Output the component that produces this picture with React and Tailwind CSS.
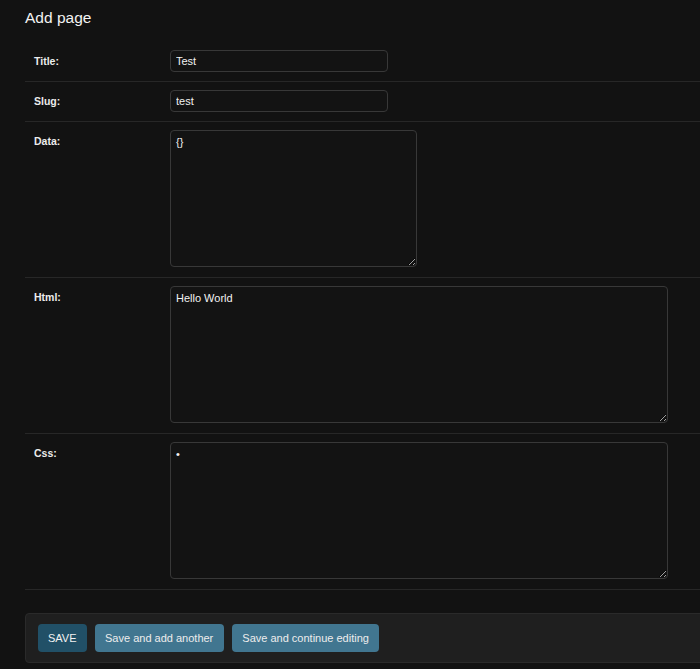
import React from "react";

const font = { fontFamily: '"Liberation Sans", Arial, sans-serif' };

function Row({ label, children, tall }) {
  return (
    <div className={`flex border-b border-[#272727] px-[9px] pt-2 ${tall ? "pb-[10px]" : "pb-[9px]"}`}>
      <div className="w-[136px] shrink-0 pt-[5px] text-[10.5px] font-bold leading-[12px] text-[#ececec]">
        {label}
      </div>
      <div className="flex-1">{children}</div>
    </div>
  );
}

function Input({ value }) {
  return (
    <input
      readOnly
      defaultValue={value}
      className="block h-[22px] w-[218px] rounded-[4px] border border-[#383838] bg-[#131313] px-[5px] text-[11px] text-[#f2f2f2] outline-none"
      style={font}
    />
  );
}

function Area({ value, w }) {
  return (
    <textarea
      readOnly
      defaultValue={value}
      className={`block h-[137px] ${w} rounded-[4px] border border-[#383838] bg-[#131313] px-[5px] py-[4px] text-[11px] leading-[14px] text-[#f2f2f2] outline-none [color-scheme:dark]`}
      style={font}
    />
  );
}

export default function App() {
  return (
    <div className="min-h-[669px] w-full overflow-hidden bg-[#121212] pl-[25px] pt-2" style={font}>
      <h1 className="mb-[14px] text-[15.5px] font-normal leading-[20px] text-[#f3f3f3]">Add page</h1>
      <div className="w-[calc(100%+20px)]">
        <Row label="Title:"><Input value="Test" /></Row>
        <Row label="Slug:"><Input value="test" /></Row>
        <Row label="Data:" tall><Area value="{}" w="w-[247px]" /></Row>
        <Row label="Html:" tall><Area value="Hello World" w="w-[498px]" /></Row>
        <Row label="Css:" tall><Area value="•" w="w-[498px]" /></Row>
      </div>
      <div className="mt-[23px] flex w-[calc(100%+20px)] gap-2 rounded-[4px] border border-[#2a2a2a] bg-[#1f1f1f] px-3 py-[10px]">
        <button className="h-[28px] rounded-[4px] bg-[#215067] px-[10px] text-[11px] text-[#f2f2f2]">SAVE</button>
        <button className="h-[28px] rounded-[4px] bg-[#417690] px-[10.5px] text-[11px] text-[#ededed]">Save and add another</button>
        <button className="h-[28px] rounded-[4px] bg-[#417690] px-[10.5px] text-[11px] text-[#ededed]">Save and continue editing</button>
      </div>
    </div>
  );
}
